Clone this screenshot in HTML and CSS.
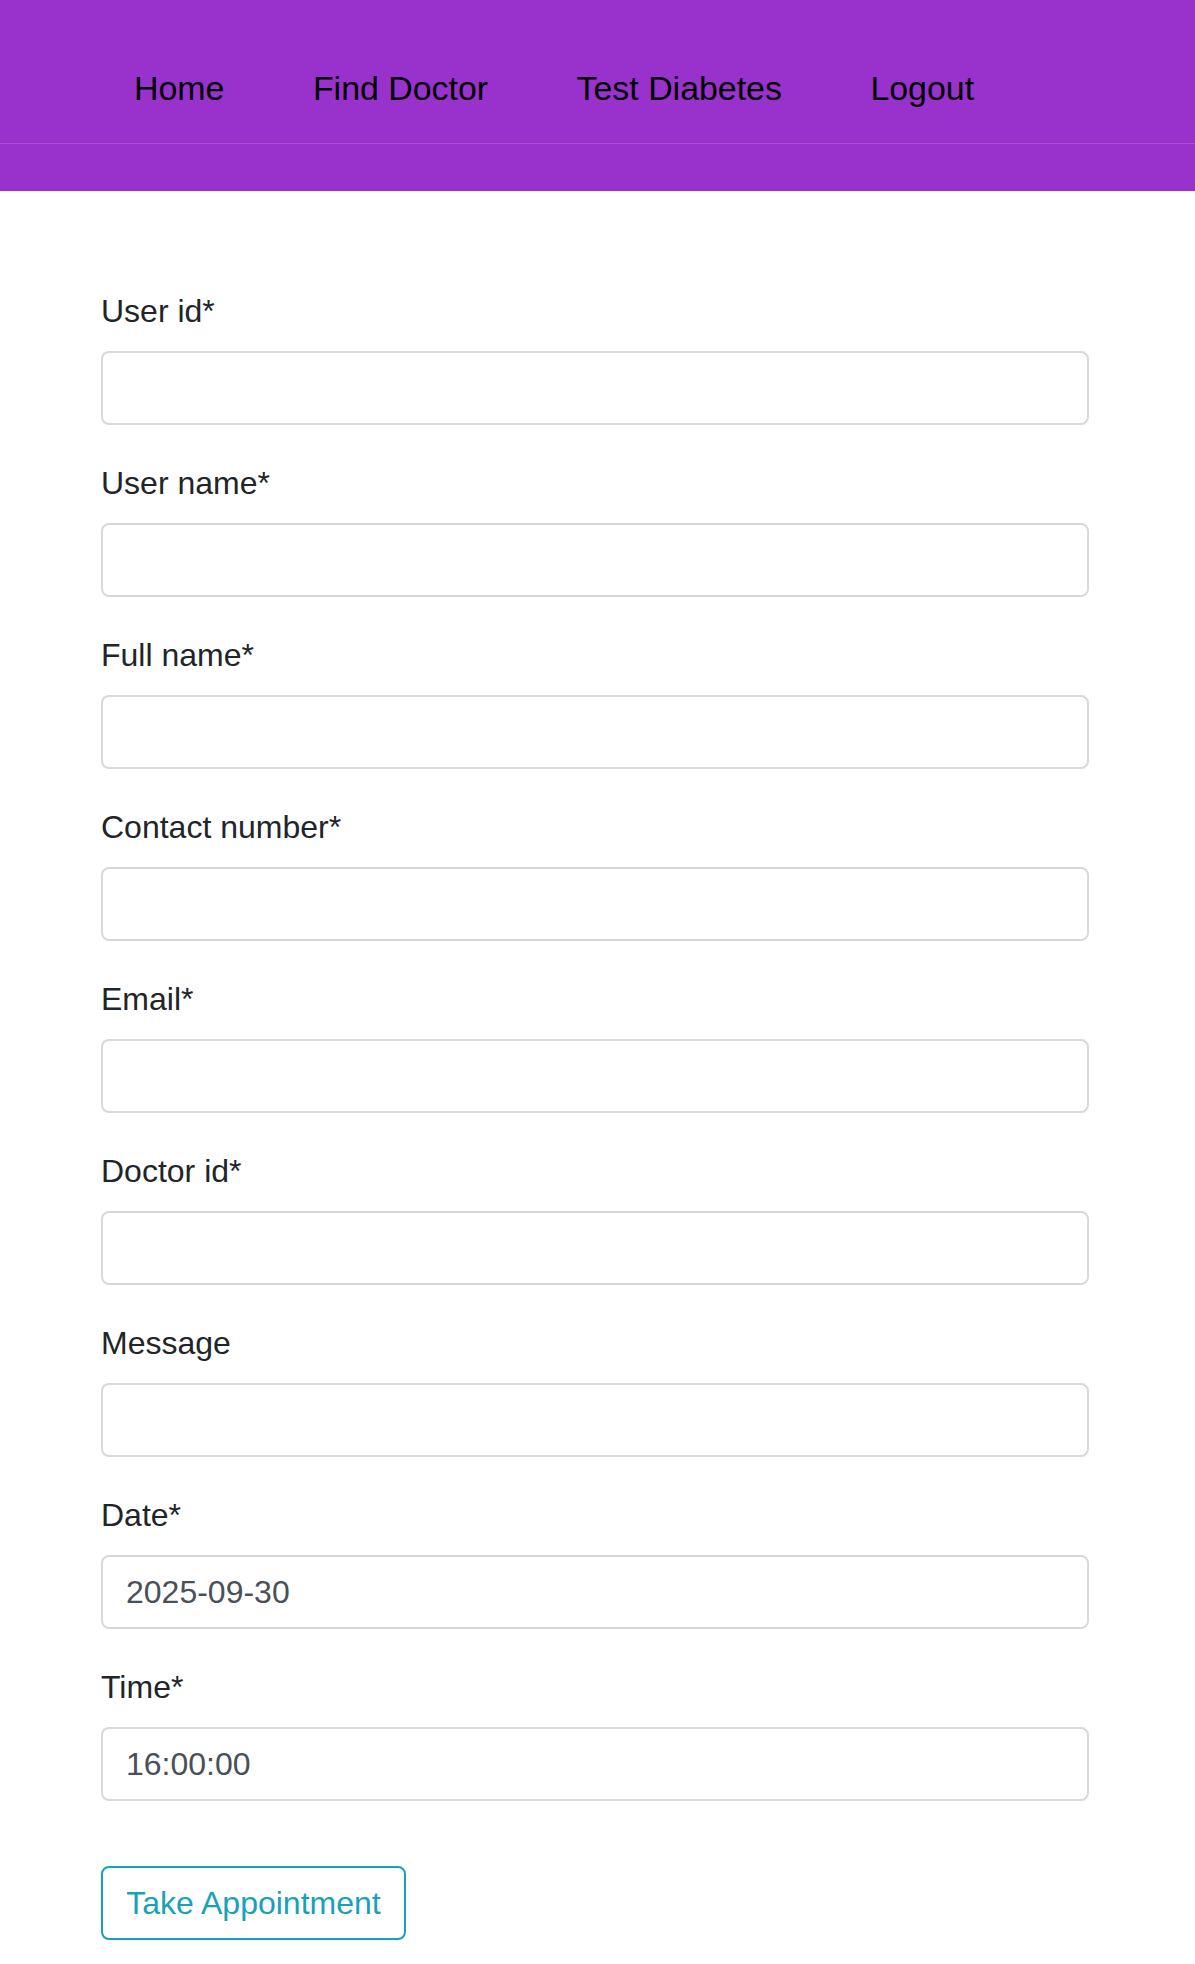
FILE: index.html
```html
<!DOCTYPE html>
<html lang="en">
<head>
<meta charset="utf-8">
<title>Take Appointment</title>
<link rel="stylesheet" href="styles.css">
</head>
<body>
<nav class="topbar">
  <ul class="nav-links">
    <li><a href="#">Home</a></li>
    <li><a href="#">Find Doctor</a></li>
    <li><a href="#">Test Diabetes</a></li>
    <li><a href="#">Logout</a></li>
  </ul>
  <div class="nav-bottom"></div>
</nav>
<main class="content">
  <form class="appt-form">
    <div class="form-group">
      <label>User id*</label>
      <input class="form-control" type="text">
    </div>
    <div class="form-group">
      <label>User name*</label>
      <input class="form-control" type="text">
    </div>
    <div class="form-group">
      <label>Full name*</label>
      <input class="form-control" type="text">
    </div>
    <div class="form-group">
      <label>Contact number*</label>
      <input class="form-control" type="text">
    </div>
    <div class="form-group">
      <label>Email*</label>
      <input class="form-control" type="text">
    </div>
    <div class="form-group">
      <label>Doctor id*</label>
      <input class="form-control" type="text">
    </div>
    <div class="form-group">
      <label>Message</label>
      <input class="form-control" type="text">
    </div>
    <div class="form-group">
      <label>Date*</label>
      <input class="form-control" type="text" value="2025-09-30">
    </div>
    <div class="form-group">
      <label>Time*</label>
      <input class="form-control" type="text" value="16:00:00">
    </div>
    <button type="button" class="btn-outline-info">Take Appointment</button>
  </form>
</main>
</body>
</html>
```

FILE: styles.css
```css
html, body {
  margin: 0;
  padding: 0;
  background: #ffffff;
}
body {
  font-family: "Liberation Sans", Arial, sans-serif;
  color: #212529;
}
.topbar {
  background: #9932cc;
}
.nav-links {
  list-style: none;
  margin: 0;
  padding: 68px 0 0 134px;
  height: 75px;
  display: flex;
  gap: 88.5px;
  border-bottom: 1px solid #a94fd5;
}
.nav-links li {
  font-size: 33.9px;
  line-height: 40px;
}
.nav-links a {
  color: #000000;
  text-decoration: none;
}
.nav-bottom {
  height: 47px;
}
.content {
  padding: 98px 106px 0 101px;
}
.appt-form {
  display: flex;
  flex-direction: column;
}
.form-group {
  display: flex;
  flex-direction: column;
  margin-bottom: 36px;
}
.form-group label {
  font-size: 32px;
  line-height: 45px;
  margin-bottom: 17px;
  color: #212529;
}
.form-control {
  box-sizing: border-box;
  width: 988px;
  height: 74px;
  border: 2px solid #d6dade;
  border-radius: 8px;
  padding: 0 23px;
  font-family: "Liberation Sans", Arial, sans-serif;
  font-size: 32px;
  color: #495057;
  background: #fff;
  outline: none;
}
.btn-outline-info {
  align-self: flex-start;
  margin-top: 29px;
  box-sizing: border-box;
  height: 74px;
  width: 305px;
  padding: 0;
  border: 2px solid #17a2b8;
  border-radius: 8px;
  background: #fff;
  color: #17a2b8;
  font-family: "Liberation Sans", Arial, sans-serif;
  font-size: 32px;
  line-height: 47px;
  cursor: pointer;
}
```
